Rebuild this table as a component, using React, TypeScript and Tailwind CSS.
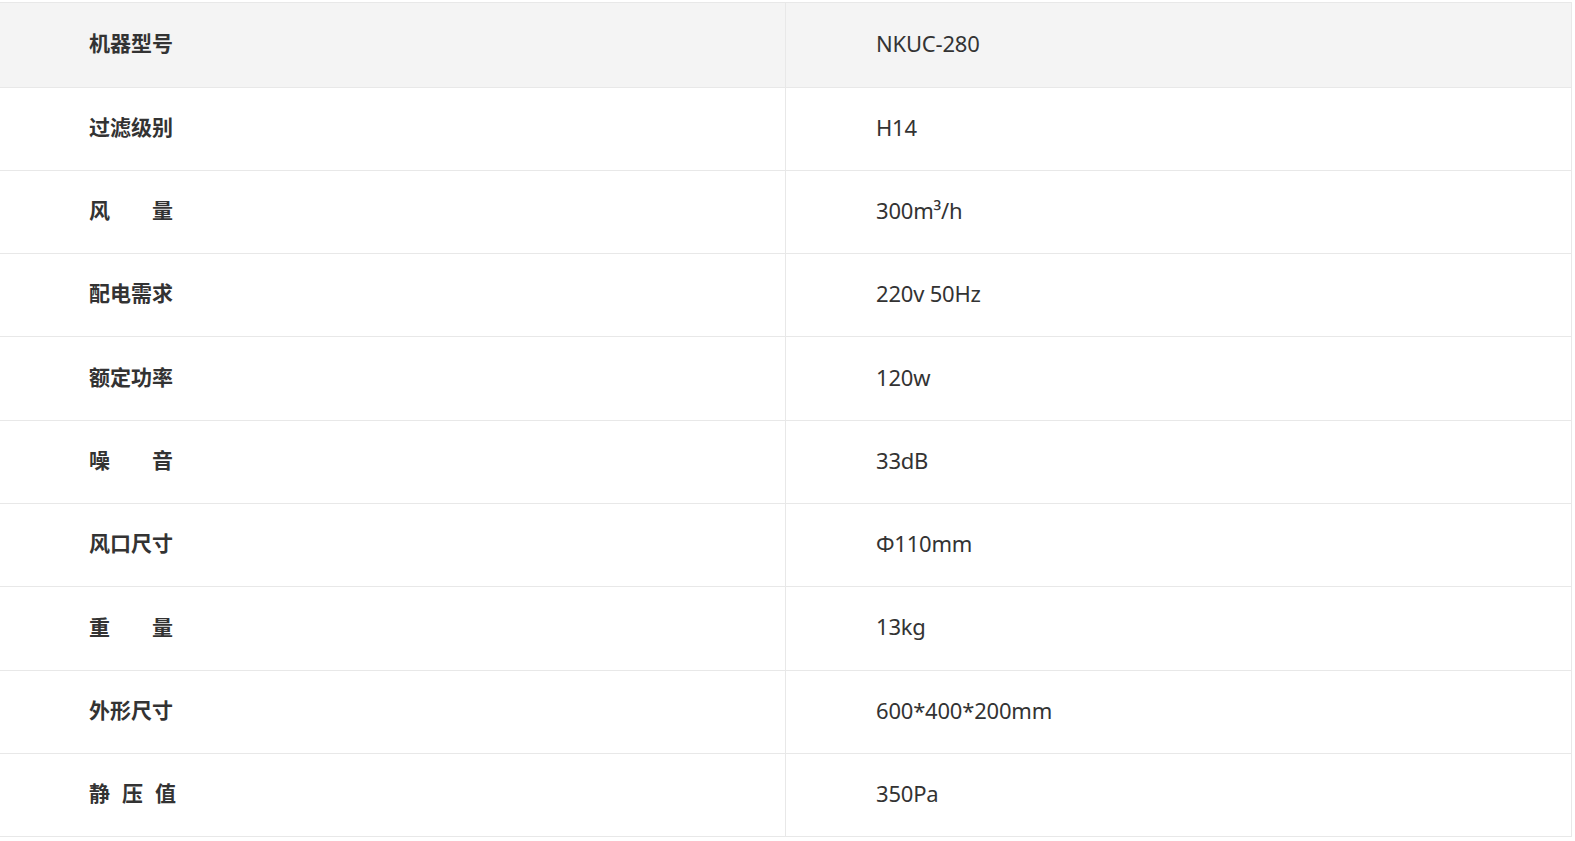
const specs: [string, string][] = [
  ["机器型号", "NKUC-280"],
  ["过滤级别", "H14"],
  ["风　　量", "300m³/h"],
  ["配电需求", "220v 50Hz"],
  ["额定功率", "120w"],
  ["噪　　音", "33dB"],
  ["风口尺寸", "Φ110mm"],
  ["重　　量", "13kg"],
  ["外形尺寸", "600*400*200mm"],
  ["静 压 值", "350Pa"],
];

export default function App() {
  return (
    <div className="w-[1575px] h-[841px] bg-white pt-[2px] font-['Noto_Sans','Noto_Sans_CJK_SC',sans-serif] text-[#333]">
      <div className="w-[1572px] border-t border-r border-[#e8e8e8]">
        {specs.map(([label, value], i) => (
          <div
            key={label}
            className={`flex border-b border-[#e8e8e8] ${i === 0 ? "h-[84.5px] bg-[#f4f4f4]" : "h-[83.3px] bg-white"}`}
          >
            <div className="w-[786px] shrink-0 flex items-center pl-[89px] pb-[2px] border-r border-[#e8e8e8] text-[21px] font-bold whitespace-pre">
              {label === "静 压 值" ? (
                <span className="flex gap-[12px]">
                  <span>静</span>
                  <span>压</span>
                  <span>值</span>
                </span>
              ) : (
                label
              )}
            </div>
            <div className="flex-1 flex items-center pl-[90px] pb-[3px] text-[22px] tracking-[-0.2px]">{value}</div>
          </div>
        ))}
      </div>
    </div>
  );
}
